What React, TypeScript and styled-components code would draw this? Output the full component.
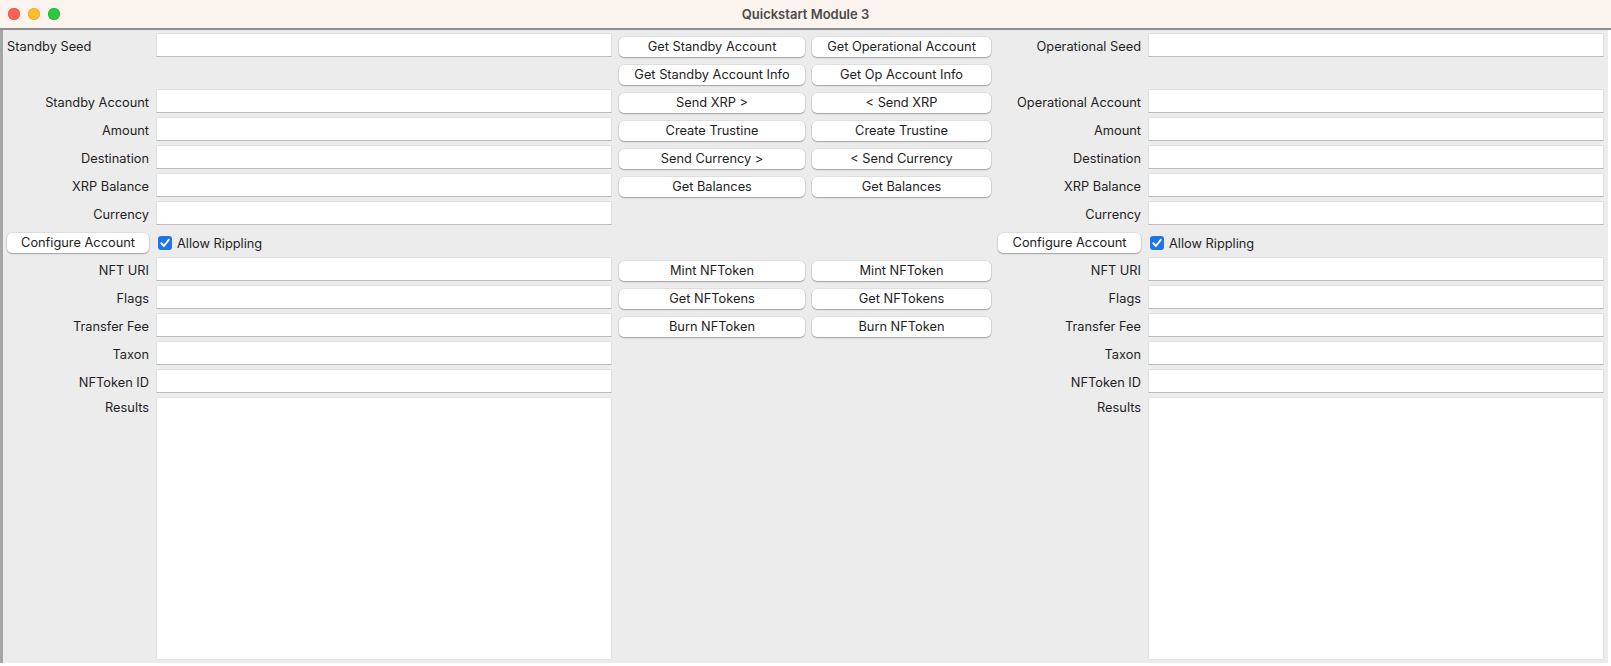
import React from "react";
import styled, { createGlobalStyle } from "styled-components";

const GlobalStyle = createGlobalStyle`
  html, body { margin: 0; padding: 0; background: #ffffff; }
  body { font-family: Inter, "Liberation Sans", Arial, sans-serif; font-size: 12.8px; color: #1f1f1f; }
  * { box-sizing: border-box; }
`;

const Window = styled.div`
  width: 1611px;
  height: 666px;
  display: flex;
  flex-direction: column;
  background: #ffffff;
`;

const TitleBar = styled.div`
  height: 30px;
  flex: none;
  position: relative;
  display: flex;
  align-items: center;
  justify-content: center;
  background: #faf3ee;
  border-bottom: 2px solid #8f8f8f;
`;

const Lights = styled.div`
  position: absolute;
  left: 8px;
  top: 8px;
  display: flex;
  gap: 8px;
`;

const Light = styled.span<{ $color: string; $ring: string }>`
  width: 12px;
  height: 12px;
  border-radius: 50%;
  background: ${(p) => p.$color};
  box-shadow: inset 0 0 0 0.5px ${(p) => p.$ring};
`;

const Title = styled.div`
  font-weight: 600;
  font-size: 13px;
  color: #4d4a48;
  margin-top: -1px;
`;

const Content = styled.div`
  flex: 1;
  margin: 0 3px 3px 0;
  padding: 3px 4px 3px 4px;
  background: #ececec;
  border-left: 3px solid #a6a6a6;
  display: grid;
  grid-template-columns: 142px 456px 186px 179px 143px 456px;
  grid-template-rows: repeat(13, 28px) 1fr;
  column-gap: 7px;
`;

const Label = styled.div<{ $col: number; $row: number; $left?: boolean; $lh?: number }>`
  grid-column: ${(p) => p.$col};
  grid-row: ${(p) => p.$row};
  height: 24px;
  line-height: ${(p) => p.$lh ?? 27}px;
  text-align: ${(p) => (p.$left ? "left" : "right")};
  white-space: nowrap;
  color: #1f1f1f;
`;

const Entry = styled.input<{ $col: number; $row: number }>`
  grid-column: ${(p) => p.$col};
  grid-row: ${(p) => p.$row};
  height: 24px;
  width: 100%;
  margin: 0;
  padding: 0 4px;
  background: #ffffff;
  border: 1px solid #e0e0e0;
  border-bottom: 1px solid #bcbcbc;
  border-radius: 0;
  outline: none;
  font: inherit;
`;

const ResultsBox = styled.textarea<{ $col: number; $row: number }>`
  grid-column: ${(p) => p.$col};
  grid-row: ${(p) => p.$row};
  width: 100%;
  height: 100%;
  margin: 0;
  resize: none;
  background: #ffffff;
  border: 1px solid #e2e2e2;
  border-radius: 0;
  outline: none;
  font: inherit;
`;

const ActionButton = styled.button<{ $col: number; $row: number }>`
  grid-column: ${(p) => p.$col};
  grid-row: ${(p) => p.$row};
  align-self: start;
  margin-top: 4px;
  height: 20px;
  width: 100%;
  padding: 0 6px;
  background: #ffffff;
  border: none;
  border-radius: 5px;
  box-shadow: 0 0 0 0.5px rgba(0, 0, 0, 0.12), 0 1px 1.5px rgba(0, 0, 0, 0.28);
  font-family: Inter, "Liberation Sans", Arial, sans-serif;
  font-size: 12.8px;
  color: #1d1d1d;
  line-height: 20px;
  white-space: nowrap;
`;

const CheckRow = styled.label<{ $col: number; $row: number }>`
  grid-column: ${(p) => p.$col};
  grid-row: ${(p) => p.$row};
  display: flex;
  align-items: center;
  gap: 5px;
  height: 28px;
  padding-left: 2px;
  color: #1f1f1f;
`;

const CheckMark = () => (
  <svg width="14" height="14" viewBox="0 0 14 14">
    <rect x="0" y="0" width="14" height="14" rx="3" fill="#1f74e8" />
    <path d="M3.3 7.2 L5.9 10 L10.8 3.8" fill="none" stroke="#ffffff" strokeWidth="1.9" strokeLinecap="round" strokeLinejoin="round" />
  </svg>
);

type Side = { labelCol: number; entryCol: number; seed: string; account: string; leftSeed?: boolean };

const sides: Side[] = [
  { labelCol: 1, entryCol: 2, seed: "Standby Seed", account: "Standby Account", leftSeed: true },
  { labelCol: 5, entryCol: 6, seed: "Operational Seed", account: "Operational Account" },
];

const fieldRows: [number, string][] = [
  [4, "Amount"],
  [5, "Destination"],
  [6, "XRP Balance"],
  [7, "Currency"],
  [9, "NFT URI"],
  [10, "Flags"],
  [11, "Transfer Fee"],
  [12, "Taxon"],
  [13, "NFToken ID"],
];

const buttons: [number, string, string][] = [
  [1, "Get Standby Account", "Get Operational Account"],
  [2, "Get Standby Account Info", "Get Op Account Info"],
  [3, "Send XRP >", "< Send XRP"],
  [4, "Create Trustine", "Create Trustine"],
  [5, "Send Currency >", "< Send Currency"],
  [6, "Get Balances", "Get Balances"],
  [9, "Mint NFToken", "Mint NFToken"],
  [10, "Get NFTokens", "Get NFTokens"],
  [11, "Burn NFToken", "Burn NFToken"],
];

export default function App() {
  return (
    <>
      <GlobalStyle />
      <Window>
        <TitleBar>
          <Lights>
            <Light $color="#fe5f57" $ring="#e0443e" />
            <Light $color="#febc2e" $ring="#dea123" />
            <Light $color="#28c840" $ring="#1aab29" />
          </Lights>
          <Title>Quickstart Module 3</Title>
        </TitleBar>
        <Content>
          {sides.map((s) => (
            <React.Fragment key={s.labelCol}>
              <Label $col={s.labelCol} $row={1} $left={s.leftSeed}>{s.seed}</Label>
              <Entry $col={s.entryCol} $row={1} />
              <Label $col={s.labelCol} $row={3}>{s.account}</Label>
              <Entry $col={s.entryCol} $row={3} />
              {fieldRows.map(([row, text]) => (
                <React.Fragment key={row}>
                  <Label $col={s.labelCol} $row={row}>{text}</Label>
                  <Entry $col={s.entryCol} $row={row} />
                </React.Fragment>
              ))}
              <ActionButton $col={s.labelCol} $row={8}>Configure Account</ActionButton>
              <CheckRow $col={s.entryCol} $row={8}>
                <CheckMark />
                Allow Rippling
              </CheckRow>
              <Label $col={s.labelCol} $row={14} $lh={21}>Results</Label>
              <ResultsBox $col={s.entryCol} $row={14} />
            </React.Fragment>
          ))}
          {buttons.map(([row, a, b]) => (
            <React.Fragment key={row}>
              <ActionButton $col={3} $row={row}>{a}</ActionButton>
              <ActionButton $col={4} $row={row}>{b}</ActionButton>
            </React.Fragment>
          ))}
        </Content>
      </Window>
    </>
  );
}
